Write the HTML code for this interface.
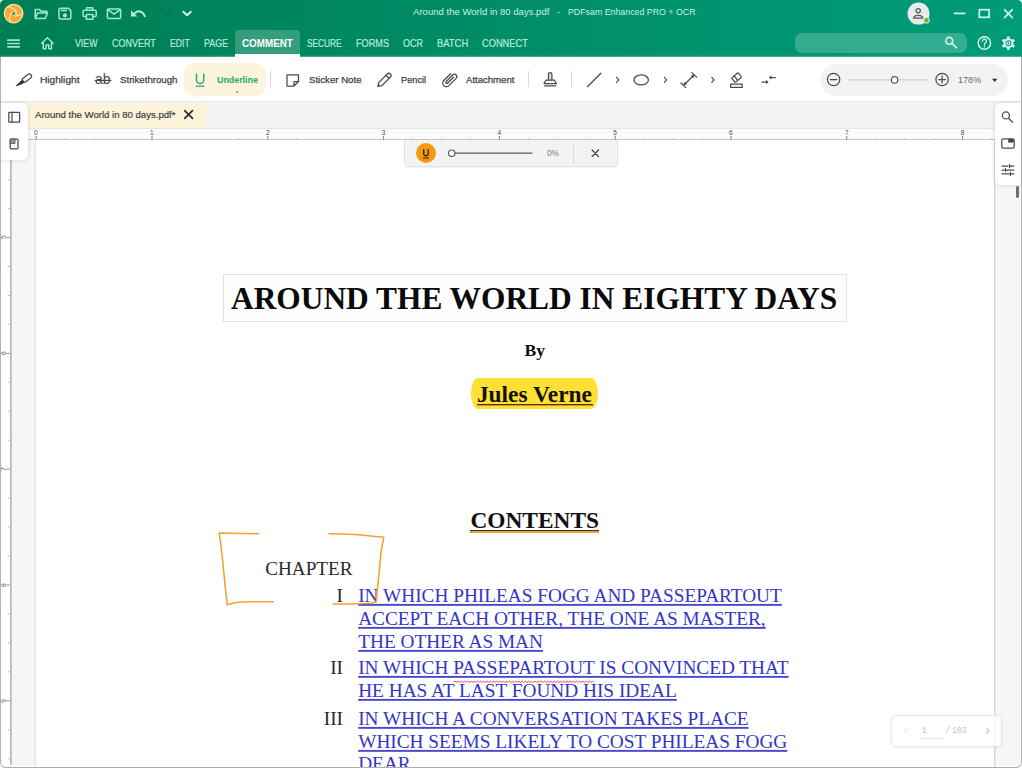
<!DOCTYPE html>
<html lang="en">
<head>
<meta charset="utf-8">
<title>Around the World in 80 days.pdf - PDFsam Enhanced PRO + OCR</title>
<style>
*{box-sizing:border-box;margin:0;padding:0}
html,body{width:1022px;height:768px;overflow:hidden;background:#fff}
body{font-family:"Liberation Sans",sans-serif;position:relative;color:#333}
.abs{position:absolute}
.lb{position:absolute;white-space:pre}
#win{position:absolute;left:0;top:0;width:1022px;height:768px;overflow:hidden;background:#fff}
#hdr{z-index:2;position:absolute;left:0;top:0;width:1022px;height:56.6px;background:linear-gradient(90deg,#007e55 0%,#00855c 25%,#008d67 50%,#009571 75%,#009b79 100%)}
#hdr:after{content:"";position:absolute;left:0;right:0;bottom:0;height:2px;background:linear-gradient(180deg,rgba(0,60,40,.15),rgba(255,255,255,.35))}
svg{position:absolute;left:0;top:0;overflow:visible}
#hdr .lb,#hdr svg{z-index:3}
.ic{stroke:#9de8d0;fill:none;stroke-width:1.5;stroke-linecap:round;stroke-linejoin:round}
#tabsel{z-index:1;position:absolute;left:235.2px;top:30px;width:64.8px;height:24.2px;background:rgba(255,255,255,.2);border-radius:3.5px 3.5px 0 0}
#tabsel:after{content:"";position:absolute;left:0;right:0;top:24.2px;height:3px;background:#fff}
#search{position:absolute;left:794.5px;top:32.5px;width:172px;height:20px;border-radius:7px;background:rgba(255,255,255,.2)}
#tb{position:absolute;left:0;top:56px;width:1022px;height:45.5px;background:#fff;border-bottom:1px solid #ececec}
.ti{stroke:#4a4a4a;fill:none;stroke-width:1.25;stroke-linecap:round;stroke-linejoin:round}
.sep{position:absolute;width:1px;background:#d6d9dc}
#tabbar{position:absolute;left:0;top:101.5px;width:1022px;height:26.5px;background:#f4f4f4}
#doctab{position:absolute;left:28px;top:1px;width:177.5px;height:25.5px;background:#fdf3da;border-radius:3px 3px 0 0}
#ruler{position:absolute;left:27px;top:128px;width:968px;height:12px;background:#fbfbfb;border-top:1px solid #e6e6e6;border-bottom:1px solid #c4c4c4}
#vr{position:absolute;left:0;top:140px;width:11.7px;height:625px;background:#fff}
#lgut{position:absolute;left:11.7px;top:140px;width:24.3px;height:625px;background:#f6f6f6}
#page{position:absolute;left:36px;top:140px;width:957.6px;height:628px;background:#fff;box-shadow:-1.2px 0 0 #e6e6e6,1.5px 0 0 #d8d8d8;font-family:"Liberation Serif",serif;color:#111}
#rgut{position:absolute;left:994.5px;top:140px;width:25.5px;height:625px;background:#f6f6f6}
.card{position:absolute;background:#fff;box-shadow:0 0 4px rgba(0,0,0,.16)}
.lnk{position:absolute;left:322.2px;color:#3434c8;transform:scaleY(.945);transform-origin:0 17.5px;text-decoration-skip-ink:none;text-decoration:underline;text-decoration-color:#4646cf;text-decoration-thickness:1.6px;text-underline-offset:2.2px;font-size:19.3px;white-space:nowrap;line-height:22px}
.num{position:absolute;width:60px;text-align:right;left:247px;font-size:19.3px;line-height:22px;color:#2a2a2a}
#frame{position:absolute;left:0;top:57px;width:1022px;height:711px;border:1px solid #b2b2b2;border-top:none;border-bottom:1.5px solid #adadad;border-radius:0 0 6px 6px;pointer-events:none}
</style>
</head>
<body>
<div id="win">

<div id="hdr">
<div id="tabsel"></div>
<div id="search"></div>
<div class="lb" style="left:412.8px;top:5.7px;font-size:9.5px;line-height:12.3px;color:#c9f1e4;transform:scaleX(1.0063);transform-origin:0 0;">Around the World in 80 days.pdf</div>
<div class="lb" style="left:557.2px;top:5.7px;font-size:9.5px;line-height:12.3px;color:#c9f1e4;transform:scaleX(0.9458);transform-origin:0 0;">-</div>
<div class="lb" style="left:568.3px;top:5.7px;font-size:9.5px;line-height:12.3px;color:#c9f1e4;transform:scaleX(0.9270);transform-origin:0 0;">PDFsam Enhanced PRO + OCR</div>
<div class="lb" style="left:74.8px;top:37.1px;font-size:10.4px;line-height:13.5px;color:#b6ecda;transform:scaleX(0.8471);transform-origin:0 0;-webkit-text-stroke:.2px #b6ecda;">VIEW</div>
<div class="lb" style="left:111.7px;top:37.1px;font-size:10.4px;line-height:13.5px;color:#b6ecda;transform:scaleX(0.8652);transform-origin:0 0;-webkit-text-stroke:.2px #b6ecda;">CONVERT</div>
<div class="lb" style="left:170.3px;top:37.1px;font-size:10.4px;line-height:13.5px;color:#b6ecda;transform:scaleX(0.8322);transform-origin:0 0;-webkit-text-stroke:.2px #b6ecda;">EDIT</div>
<div class="lb" style="left:204.1px;top:37.1px;font-size:10.4px;line-height:13.5px;color:#b6ecda;transform:scaleX(0.8574);transform-origin:0 0;-webkit-text-stroke:.2px #b6ecda;">PAGE</div>
<div class="lb" style="left:241.8px;top:37.1px;font-size:10.4px;line-height:13.5px;color:#ffffff;font-weight:bold;transform:scaleX(0.9462);transform-origin:0 0;">COMMENT</div>
<div class="lb" style="left:307.0px;top:37.1px;font-size:10.4px;line-height:13.5px;color:#b6ecda;transform:scaleX(0.7965);transform-origin:0 0;-webkit-text-stroke:.2px #b6ecda;">SECURE</div>
<div class="lb" style="left:355.5px;top:37.1px;font-size:10.4px;line-height:13.5px;color:#b6ecda;transform:scaleX(0.8793);transform-origin:0 0;-webkit-text-stroke:.2px #b6ecda;">FORMS</div>
<div class="lb" style="left:402.9px;top:37.1px;font-size:10.4px;line-height:13.5px;color:#b6ecda;transform:scaleX(0.8660);transform-origin:0 0;-webkit-text-stroke:.2px #b6ecda;">OCR</div>
<div class="lb" style="left:436.9px;top:37.1px;font-size:10.4px;line-height:13.5px;color:#b6ecda;transform:scaleX(0.9056);transform-origin:0 0;-webkit-text-stroke:.2px #b6ecda;">BATCH</div>
<div class="lb" style="left:481.9px;top:37.1px;font-size:10.4px;line-height:13.5px;color:#b6ecda;transform:scaleX(0.8915);transform-origin:0 0;-webkit-text-stroke:.2px #b6ecda;">CONNECT</div>
<svg width="1022" height="57" viewBox="0 0 1022 57">
 <!-- logo -->
 <circle cx="13.6" cy="13.6" r="9.3" fill="#f6aa35" stroke="#fae7a6" stroke-width="1.2"/>
 <g fill="none" stroke="#fcebb8" stroke-width="1.25" stroke-linecap="round">
  <path d="M8.4 6.9 C11 7.2 13.6 8.6 15.4 10.4 C16.3 11.5 16.5 12.8 16.2 14.2"/>
  <path d="M15.4 15.9 C17.8 16.2 20.4 15.2 22.4 13.4"/>
  <path d="M11.3 12.9 C9.9 14.6 9.4 17.8 10.2 21.6"/>
 </g>
 <path d="M10.6 13.6 L15.3 11 L15.3 16.2 Z" fill="#3c8c6c" stroke="#fcebb8" stroke-width=".7" stroke-linejoin="round"/>
 <!-- folder open -->
 <path class="ic" d="M35.2 18.5 V9.6 h4.3 l1.6 1.7 h5.6 v1.8 M35.2 18.5 l2.3 -5.4 h10 l-2.3 5.4 Z"/>
 <!-- save -->
 <path class="ic" d="M60.2 8.2 h8.2 l2.4 2.4 v7.2 a1.2 1.2 0 0 1 -1.2 1.2 h-9.4 a1.2 1.2 0 0 1 -1.2 -1.2 v-8.4 a1.2 1.2 0 0 1 1.2 -1.2 Z"/>
 <rect x="60.9" y="9.6" width="6" height="1.7" fill="#9de8d0"/>
 <circle cx="64.9" cy="15.4" r="2.05" fill="#9de8d0"/>
 <!-- print -->
 <path class="ic" d="M86.6 10.2 V7.8 h6 v2.4 M86.2 16.4 h-2.2 a1 1 0 0 1 -1 -1 v-3.8 a1.4 1.4 0 0 1 1.4 -1.4 h10.4 a1.4 1.4 0 0 1 1.4 1.4 v3.8 a1 1 0 0 1 -1 1 h-2.2 M86.4 14.6 h6.4 v4.6 h-6.4 Z"/>
 <!-- mail -->
 <path class="ic" d="M108.6 8.9 h10.8 a1.2 1.2 0 0 1 1.2 1.2 v7.2 a1.2 1.2 0 0 1 -1.2 1.2 h-10.8 a1.2 1.2 0 0 1 -1.2 -1.2 v-7.2 a1.2 1.2 0 0 1 1.2 -1.2 Z M107.8 9.6 l6.2 4.6 l6.2 -4.6"/>
 <!-- undo -->
 <path d="M131 10.3 V16.6 H137.2 Z" fill="#b4efdc"/>
 <path d="M134.2 13.6 C137.5 10 142.8 10.6 144.8 16.2" fill="none" stroke="#b4efdc" stroke-width="1.9" stroke-linecap="round"/>
 <!-- redo (disabled) -->
 <path d="M169.4 10.6 V16.4 H163.6 Z" fill="#007650" opacity=".75"/>
 <path d="M166.4 13.6 C163.4 10.6 158.6 11 156.8 15.8" fill="none" stroke="#007a55" stroke-width="1.7" stroke-linecap="round" opacity=".6"/>
 <!-- chevron -->
 <path d="M183.3 11.8 L187.1 15.3 L190.9 11.8" fill="none" stroke="#d2f6ea" stroke-width="1.9" stroke-linecap="round" stroke-linejoin="round"/>
 <!-- hamburger -->
 <path d="M7.2 40.1 H19.8 M7.2 43.5 H19.8 M7.2 46.9 H19.8" stroke="#9de8d0" stroke-width="1.6" fill="none"/>
 <!-- home -->
 <path class="ic" stroke-width="1.6" d="M41.6 43.2 L47.4 37.8 L53.2 43.2 M43.3 42.2 V48.8 H46 V45 H48.8 V48.8 H51.5 V42.2"/>
 <!-- avatar -->
 <circle cx="918.5" cy="13.6" r="11" fill="#e9eaea"/>
 <circle cx="918.2" cy="10.8" r="2.1" fill="none" stroke="#555" stroke-width="1.25"/>
 <path d="M913.6 18.2 c0 -2.2 2.2 -2.9 4.6 -2.9 s4.6 .7 4.6 2.9 Z" fill="none" stroke="#555" stroke-width="1.25" stroke-linejoin="round"/>
 <circle cx="926.5" cy="20.3" r="2.9" fill="#68b62e" stroke="#eef3e6" stroke-width="1"/>
 <!-- window controls -->
 <path d="M953.8 13.4 H965.4" stroke="#c9f5e8" stroke-width="1.8" fill="none"/>
 <rect x="979.3" y="9.7" width="9.8" height="7.6" fill="none" stroke="#c9f5e8" stroke-width="1.7"/>
 <path d="M1004.5 9.6 L1012.3 17.6 M1012.3 9.6 L1004.5 17.6" stroke="#c9f5e8" stroke-width="1.7" fill="none" stroke-linecap="round"/>
 <!-- search icon -->
 <circle cx="949.3" cy="40.7" r="3.4" fill="none" stroke="#c9f5e8" stroke-width="1.7"/>
 <path d="M951.9 43.4 L956.4 47.6" stroke="#c9f5e8" stroke-width="1.9" stroke-linecap="round"/>
 <!-- help -->
 <circle cx="984.4" cy="43" r="6.2" fill="none" stroke="#d8f8ee" stroke-width="1.4"/>
 <path d="M982.4 41.2 a2 2 0 1 1 3.2 1.6 c-.9 .6 -1.2 1 -1.2 2" fill="none" stroke="#d8f8ee" stroke-width="1.3" stroke-linecap="round"/>
 <circle cx="984.4" cy="46.6" r=".8" fill="#d8f8ee"/>
 <!-- gear -->
 <g transform="translate(1008.4 43.2)" fill="none" stroke="#d8f8ee">
  <circle r="4" stroke-width="2.1"/>
  <circle r="1.5" stroke-width="1.1"/>
  <g stroke-width="2.6" stroke-linecap="butt">
   <path d="M0 -4.6 V-6.8"/><path d="M0 4.6 V6.8"/>
   <path d="M3.98 -2.3 L5.89 -3.4"/><path d="M-3.98 -2.3 L-5.89 -3.4"/>
   <path d="M3.98 2.3 L5.89 3.4"/><path d="M-3.98 2.3 L-5.89 3.4"/>
  </g>
 </g>
 <!-- top corners -->
 <path d="M0 0 H4.5 A4.5 4.5 0 0 0 0 4.5 Z" fill="#fff"/>
 <path d="M1022 0 H1017.5 A4.5 4.5 0 0 1 1022 4.5 Z" fill="#fff"/>
</svg>
</div>


<div id="tb"></div>
<div class="abs" style="left:820px;top:63.5px;width:188px;height:32px;border-radius:16px;background:#f3f3f3"></div>
<div class="abs" style="left:184px;top:63.4px;width:81.5px;height:32.7px;border-radius:10px;background:#fdf4dd"></div>
<div class="lb" style="left:39.7px;top:73.5px;font-size:9.6px;line-height:12.5px;color:#404040;transform:scaleX(1.0577);transform-origin:0 0;-webkit-text-stroke:.25px #404040;">Highlight</div>
<div class="lb" style="left:95.4px;top:70.1px;font-size:14.4px;line-height:18.7px;color:#444;transform:scaleX(0.9616);transform-origin:0 0;">ab</div>
<div class="lb" style="left:119.5px;top:73.5px;font-size:9.6px;line-height:12.5px;color:#404040;transform:scaleX(1.0077);transform-origin:0 0;-webkit-text-stroke:.25px #404040;">Strikethrough</div>
<div class="lb" style="left:217.2px;top:73.5px;font-size:9.6px;line-height:12.5px;color:#1fa56c;font-weight:bold;transform:scaleX(0.9243);transform-origin:0 0;">Underline</div>
<div class="lb" style="left:308.8px;top:73.5px;font-size:9.6px;line-height:12.5px;color:#404040;transform:scaleX(1.0045);transform-origin:0 0;-webkit-text-stroke:.25px #404040;">Sticker Note</div>
<div class="lb" style="left:401.3px;top:73.5px;font-size:9.6px;line-height:12.5px;color:#404040;transform:scaleX(0.9602);transform-origin:0 0;-webkit-text-stroke:.25px #404040;">Pencil</div>
<div class="lb" style="left:466.3px;top:73.5px;font-size:9.6px;line-height:12.5px;color:#404040;transform:scaleX(0.9973);transform-origin:0 0;-webkit-text-stroke:.25px #404040;">Attachment</div>
<div class="lb" style="left:957.5px;top:73.9px;font-size:9.2px;line-height:12.0px;color:#6a6a6a;transform:scaleX(0.9872);transform-origin:0 0;">178%</div>
<div class="sep" style="left:270px;top:71px;height:16px"></div>
<div class="sep" style="left:527.5px;top:71px;height:16px"></div>
<div class="sep" style="left:571px;top:71px;height:16px"></div>
<svg width="1022" height="110" viewBox="0 0 1022 110">
 <!-- highlighter -->
 <g transform="translate(26.4 78.5) rotate(-38)">
  <rect x="-4.6" y="-2.3" width="10.4" height="4.6" rx="2.2" class="ti"/>
 </g>
 <path d="M22.6 79.6 L24.6 82.4 C21.5 84.6 18.5 85.6 15.4 86 C17.4 84.2 19.8 82.2 22.6 79.6 Z" fill="#333"/>
 <!-- strikethrough line -->
 <path d="M94.6 80.4 H111.4" stroke="#444" stroke-width="1.1"/>
 <!-- underline U -->
 <path d="M196.5 74 V79.9 a3.65 3.65 0 0 0 7.3 0 V74" fill="none" stroke="#2aa873" stroke-width="1.45" stroke-linecap="round"/>
 <path d="M195.8 86.2 H204.5" stroke="#2aa873" stroke-width="1.3"/>
 <circle cx="237.3" cy="91.8" r=".9" fill="#1d8f5c"/>
 <!-- sticker note -->
 <path class="ti" d="M287 74.9 H298.5 V81.5 L294 86 H287 Z M298.5 81.5 H294 V86"/>
 <!-- pencil -->
 <g transform="translate(384.6 79.8) rotate(-45)">
  <path class="ti" d="M-6.2 -2.2 H6 a2.2 2.2 0 0 1 0 4.4 H-6.2 L-9.4 0 Z M4.2 -2.2 V2.2"/><path d="M-9.6 0 L-7.2 -1.5 V1.5 Z" fill="#444"/>
 </g>
 <!-- paperclip -->
 <g transform="translate(449.6 79.8) rotate(-45)">
  <path class="ti" d="M5 -3.6 H-4.6 a3.6 3.6 0 0 0 0 7.2 H5.6 a2.4 2.4 0 0 0 0 -4.8 H-3.6 a1.1 1.1 0 0 0 0 2.2 H4.6"/>
 </g>
 <!-- stamp -->
 <path class="ti" d="M548.5 80 V74.3 a1.7 1.7 0 0 1 3.4 0 V80" fill="#e2e2e2" style="fill:#e4e4e4"/>
 <path class="ti" d="M546 80.2 H554.4 L556.4 83.6 H544 Z M544.6 85.9 H555.8"/>
 <!-- line -->
 <path class="ti" d="M587.6 86.5 L600.9 73.2" stroke-width="1.4"/>
 <path class="ti" d="M616.6 77.4 L618.8 79.9 L616.6 82.4" stroke-width=".95" stroke="#888"/>
 <!-- ellipse -->
 <ellipse cx="641.2" cy="79.9" rx="7.2" ry="5" class="ti" stroke-width="1.4"/>
 <path class="ti" d="M664.4 77.4 L666.6 79.9 L664.4 82.4" stroke-width=".95" stroke="#888"/>
 <!-- measure -->
 <path class="ti" d="M683.6 85.2 L694.3 74.7 M681 83 L685.8 87.6 M691.8 72.6 L696.7 77.1" stroke-width="1.05"/>
 <path d="M684.2 84.6 L684.6 82.2 L686.6 84.2 Z M693.7 75.3 L691.3 75.7 L693.3 77.7 Z" fill="#444" stroke="#444" stroke-width=".6" stroke-linejoin="round"/>
 <path class="ti" d="M711.8 77.4 L714 79.9 L711.8 82.4" stroke-width=".95" stroke="#888"/>
 <!-- eraser -->
 <g transform="translate(736.6 77.6) rotate(-40)">
  <rect x="-4.2" y="-2.9" width="8.4" height="5.8" rx="1" class="ti"/>
  <path class="ti" d="M-.8 -2.9 V2.9"/>
 </g>
 <rect x="730.6" y="84.2" width="11.6" height="3.2" class="ti"/>
 <!-- arrows -->
 <path class="ti" d="M762 82 H767 M775.4 77.5 H770.4" stroke-width="1.25"/>
 <path d="M766 80.1 L768.6 82 L766 83.9 Z M771.4 75.6 L768.8 77.5 L771.4 79.4 Z" fill="#444"/>
 <!-- zoom -->
 <circle cx="833.6" cy="79.5" r="6.2" class="ti" stroke-width="1.3"/>
 <path class="ti" d="M830.2 79.5 H837" stroke-width="1.4"/>
 <path d="M848.4 79.9 H927.7" stroke="#c9c9c9" stroke-width="1"/>
 <circle cx="894.6" cy="79.9" r="3.2" fill="#fff" stroke="#555" stroke-width="1.2"/>
 <circle cx="942.1" cy="79.5" r="6.2" class="ti" stroke-width="1.3"/>
 <path class="ti" d="M938.7 79.5 H945.5 M942.1 76.1 V82.9" stroke-width="1.4"/>
 <path d="M992 78.8 H997.4 L994.7 81.9 Z" fill="#333"/>
</svg>


<div id="tabbar"><div id="doctab"></div></div>
<div class="lb" style="left:34.6px;top:109.0px;font-size:9.5px;line-height:12.3px;color:#3d3d3d;transform:scaleX(1.0090);transform-origin:0 0;-webkit-text-stroke:.2px #3d3d3d;">Around the World in 80 days.pdf*</div>
<div id="ruler"></div>
<div id="vr"></div>
<div id="lgut"></div>
<div id="rgut"></div>
<div class="lb" style="left:34.0px;top:129.1px;font-size:6.5px;line-height:8.5px;color:#4a4a4a;">0</div><div class="lb" style="left:150.1px;top:129.1px;font-size:6.5px;line-height:8.5px;color:#4a4a4a;">1</div><div class="lb" style="left:265.9px;top:129.1px;font-size:6.5px;line-height:8.5px;color:#4a4a4a;">2</div><div class="lb" style="left:381.7px;top:129.1px;font-size:6.5px;line-height:8.5px;color:#4a4a4a;">3</div><div class="lb" style="left:497.5px;top:129.1px;font-size:6.5px;line-height:8.5px;color:#4a4a4a;">4</div><div class="lb" style="left:613.3px;top:129.1px;font-size:6.5px;line-height:8.5px;color:#4a4a4a;">5</div><div class="lb" style="left:729.1px;top:129.1px;font-size:6.5px;line-height:8.5px;color:#4a4a4a;">6</div><div class="lb" style="left:844.9px;top:129.1px;font-size:6.5px;line-height:8.5px;color:#4a4a4a;">7</div><div class="lb" style="left:960.7px;top:129.1px;font-size:6.5px;line-height:8.5px;color:#4a4a4a;">8</div>
<div class="lb" style="left:-.3px;top:233.4px;width:8px;height:8px;font-size:6.8px;line-height:8px;color:#666;text-align:center;transform:rotate(-90deg)">5</div><div class="lb" style="left:-.3px;top:349.2px;width:8px;height:8px;font-size:6.8px;line-height:8px;color:#666;text-align:center;transform:rotate(-90deg)">6</div><div class="lb" style="left:-.3px;top:465.0px;width:8px;height:8px;font-size:6.8px;line-height:8px;color:#666;text-align:center;transform:rotate(-90deg)">7</div><div class="lb" style="left:-.3px;top:580.8px;width:8px;height:8px;font-size:6.8px;line-height:8px;color:#666;text-align:center;transform:rotate(-90deg)">8</div><div class="lb" style="left:-.3px;top:696.6px;width:8px;height:8px;font-size:6.8px;line-height:8px;color:#666;text-align:center;transform:rotate(-90deg)">9</div>
<svg width="1022" height="768" viewBox="0 0 1022 768">
 <path d="M184.7 110.6 L192.5 118.4 M192.5 110.6 L184.7 118.4" stroke="#2b2b2b" stroke-width="1.65" stroke-linecap="round"/>
 <path d="M36.2 136 V139.5" stroke="#7d7d7d" stroke-width="1"/>
<path d="M152.0 136 V139.5" stroke="#7d7d7d" stroke-width="1"/>
<path d="M267.8 136 V139.5" stroke="#7d7d7d" stroke-width="1"/>
<path d="M383.6 136 V139.5" stroke="#7d7d7d" stroke-width="1"/>
<path d="M499.4 136 V139.5" stroke="#7d7d7d" stroke-width="1"/>
<path d="M615.2 136 V139.5" stroke="#7d7d7d" stroke-width="1"/>
<path d="M731.0 136 V139.5" stroke="#7d7d7d" stroke-width="1"/>
<path d="M846.8 136 V139.5" stroke="#7d7d7d" stroke-width="1"/>
<path d="M962.6 136 V139.5" stroke="#7d7d7d" stroke-width="1"/>
<path d="M65.2 138 V139.5" stroke="#c2c2c2" stroke-width="1"/>
<path d="M94.1 138 V139.5" stroke="#c2c2c2" stroke-width="1"/>
<path d="M123.0 138 V139.5" stroke="#c2c2c2" stroke-width="1"/>
<path d="M180.9 138 V139.5" stroke="#c2c2c2" stroke-width="1"/>
<path d="M209.9 138 V139.5" stroke="#c2c2c2" stroke-width="1"/>
<path d="M238.9 138 V139.5" stroke="#c2c2c2" stroke-width="1"/>
<path d="M296.8 138 V139.5" stroke="#c2c2c2" stroke-width="1"/>
<path d="M325.7 138 V139.5" stroke="#c2c2c2" stroke-width="1"/>
<path d="M354.6 138 V139.5" stroke="#c2c2c2" stroke-width="1"/>
<path d="M412.5 138 V139.5" stroke="#c2c2c2" stroke-width="1"/>
<path d="M441.5 138 V139.5" stroke="#c2c2c2" stroke-width="1"/>
<path d="M470.4 138 V139.5" stroke="#c2c2c2" stroke-width="1"/>
<path d="M528.4 138 V139.5" stroke="#c2c2c2" stroke-width="1"/>
<path d="M557.3 138 V139.5" stroke="#c2c2c2" stroke-width="1"/>
<path d="M586.2 138 V139.5" stroke="#c2c2c2" stroke-width="1"/>
<path d="M644.1 138 V139.5" stroke="#c2c2c2" stroke-width="1"/>
<path d="M673.1 138 V139.5" stroke="#c2c2c2" stroke-width="1"/>
<path d="M702.1 138 V139.5" stroke="#c2c2c2" stroke-width="1"/>
<path d="M760.0 138 V139.5" stroke="#c2c2c2" stroke-width="1"/>
<path d="M788.9 138 V139.5" stroke="#c2c2c2" stroke-width="1"/>
<path d="M817.9 138 V139.5" stroke="#c2c2c2" stroke-width="1"/>
<path d="M875.8 138 V139.5" stroke="#c2c2c2" stroke-width="1"/>
<path d="M904.7 138 V139.5" stroke="#c2c2c2" stroke-width="1"/>
<path d="M933.6 138 V139.5" stroke="#c2c2c2" stroke-width="1"/>
<path d="M991.6 138 V139.5" stroke="#c2c2c2" stroke-width="1"/>
<path d="M7.9 179.7 H9.7" stroke="#b5b5b5" stroke-width="1"/>
<path d="M7.9 208.6 H9.7" stroke="#b5b5b5" stroke-width="1"/>
<path d="M6.6 237.6 H9.6" stroke="#8a8a8a" stroke-width="1"/>
<path d="M7.9 266.5 H9.7" stroke="#b5b5b5" stroke-width="1"/>
<path d="M7.9 295.5 H9.7" stroke="#b5b5b5" stroke-width="1"/>
<path d="M7.9 324.4 H9.7" stroke="#b5b5b5" stroke-width="1"/>
<path d="M6.6 353.4 H9.6" stroke="#8a8a8a" stroke-width="1"/>
<path d="M7.9 382.3 H9.7" stroke="#b5b5b5" stroke-width="1"/>
<path d="M7.9 411.3 H9.7" stroke="#b5b5b5" stroke-width="1"/>
<path d="M7.9 440.2 H9.7" stroke="#b5b5b5" stroke-width="1"/>
<path d="M6.6 469.2 H9.6" stroke="#8a8a8a" stroke-width="1"/>
<path d="M7.9 498.1 H9.7" stroke="#b5b5b5" stroke-width="1"/>
<path d="M7.9 527.1 H9.7" stroke="#b5b5b5" stroke-width="1"/>
<path d="M7.9 556.0 H9.7" stroke="#b5b5b5" stroke-width="1"/>
<path d="M6.6 585.0 H9.6" stroke="#8a8a8a" stroke-width="1"/>
<path d="M7.9 614.0 H9.7" stroke="#b5b5b5" stroke-width="1"/>
<path d="M7.9 642.9 H9.7" stroke="#b5b5b5" stroke-width="1"/>
<path d="M7.9 671.9 H9.7" stroke="#b5b5b5" stroke-width="1"/>
<path d="M6.6 700.8 H9.6" stroke="#8a8a8a" stroke-width="1"/>
<path d="M7.9 729.8 H9.7" stroke="#b5b5b5" stroke-width="1"/>
<path d="M7.9 758.7 H9.7" stroke="#b5b5b5" stroke-width="1"/>
 <rect x="10" y="159.5" width="1.75" height="605.3" fill="#b7b7b7"/>
</svg>


<div id="page">
<div class="abs" style="left:186.5px;top:134px;width:624px;height:47.5px;border:1px solid #e3e3e3;background:#fefefe"></div>
<div class="abs" style="left:195px;top:141.3px;font-size:31.4px;line-height:36px;font-weight:bold;white-space:nowrap;color:#0a0a0a">AROUND THE WORLD IN EIGHTY DAYS</div>
<div class="abs" style="left:488.6px;top:198.5px;font-size:17.6px;line-height:22px;font-weight:bold;color:#111">By</div>
<div class="abs" style="left:435.3px;top:238.3px;width:126.8px;height:31px;background:#ffe135;border-radius:7px/15px"></div>
<div class="abs" style="left:440.9px;top:240.1px;font-size:23.4px;line-height:28px;font-weight:bold;white-space:nowrap;color:#14110a">Jules Verne</div>
<div class="abs" style="left:441.2px;top:264.2px;width:115.4px;height:1px;background:#4a3704"></div>
<div class="abs" style="left:441.2px;top:265.2px;width:115.4px;height:1.3px;background:#d9980f"></div>
<div class="abs" style="left:434.4px;top:366.2px;font-size:23.4px;line-height:28px;font-weight:bold;white-space:nowrap;color:#111">CONTENTS</div>
<div class="abs" style="left:434.4px;top:390.1px;width:128.6px;height:.9px;background:#333"></div>
<div class="abs" style="left:434.4px;top:391px;width:128.6px;height:1.6px;background:#f0a030"></div>
<div class="abs" style="left:229.2px;top:418.4px;font-size:19.2px;line-height:22px;white-space:nowrap;color:#2a2a2a">CHAPTER</div>
<div class="num" style="top:445.4px">I</div><div class="lnk" style="top:445.4px">IN WHICH PHILEAS FOGG AND PASSEPARTOUT</div>
<div class="lnk" style="top:468.1px">ACCEPT EACH OTHER, THE ONE AS MASTER,</div>
<div class="lnk" style="top:490.8px">THE OTHER AS MAN</div>
<div class="num" style="top:517.1px">II</div><div class="lnk" style="top:517.1px">IN WHICH PASSEPARTOUT IS CONVINCED THAT</div>
<div class="lnk" style="top:539.7px">HE HAS AT LAST FOUND HIS IDEAL</div>
<div class="num" style="top:568.2px">III</div><div class="lnk" style="top:568.2px">IN WHICH A CONVERSATION TAKES PLACE</div>
<div class="lnk" style="top:590.6px">WHICH SEEMS LIKELY TO COST PHILEAS FOGG</div>
<div class="lnk" style="top:613.0px">DEAR</div>
</div>


<svg width="1022" height="768" viewBox="0 0 1022 768">
 <!-- hand-drawn brackets -->
 <path d="M258.5 533.7 C245 533.6 232 533.2 219.1 533.1 C220 538 220.8 543 221.2 548.5 C222.2 556 223 563 223.6 570.3 C224.3 576.5 224.9 582.5 225.4 588.4 C226 594 226.6 599.5 227.2 604.7 C230.5 603.8 233.8 603 237.2 602.5 C243 601.9 249 601.9 255.3 601.8 C261.5 601.8 267.5 601.8 273.4 601.8" fill="none" stroke="#f2a233" stroke-width="1.55" stroke-linecap="round" stroke-linejoin="round"/>
 <path d="M329.1 533.7 C338 533.8 346.5 534 354.8 534.4 C364.5 535.2 374 536.2 383.8 537.3 C382.8 542.2 381.8 547.2 381.1 552.2 C380.4 558.2 379.8 564.2 379.3 570.3 C378.7 576.3 378.1 582.3 377.5 588.4 C377 593 376.6 597.5 376.2 601.9 C374 602.5 371.7 602.9 369.3 603.2 C363.3 603.6 357.3 603.8 351.2 603.9 C345.2 603.9 339.2 603.9 333.1 603.9" fill="none" stroke="#f2a233" stroke-width="1.55" stroke-linecap="round" stroke-linejoin="round"/>
 <!-- squiggly -->
 <path d="M453.3 681.8 L454.9 681.1 L456.5 682.5 L458.1 681.1 L459.7 682.5 L461.3 681.1 L462.9 682.5 L464.5 681.1 L466.1 682.5 L467.7 681.1 L469.3 682.5 L470.9 681.1 L472.5 682.5 L474.1 681.1 L475.7 682.5 L477.3 681.1 L478.9 682.5 L480.5 681.1 L482.1 682.5 L483.7 681.1 L485.3 682.5 L486.9 681.1 L488.5 682.5 L490.1 681.1 L491.7 682.5 L493.3 681.1 L494.9 682.5 L496.5 681.1 L498.1 682.5 L499.7 681.1 L501.3 682.5 L502.9 681.1 L504.5 682.5 L506.1 681.1 L507.7 682.5 L509.3 681.1 L510.9 682.5 L512.5 681.1 L514.1 682.5 L515.7 681.1 L517.3 682.5 L518.9 681.1 L520.5 682.5 L522.1 681.1 L523.7 682.5 L525.3 681.1 L526.9 682.5 L528.5 681.1 L530.1 682.5 L531.7 681.1 L533.3 682.5 L534.9 681.1 L536.5 682.5 L538.1 681.1 L539.7 682.5 L541.3 681.1 L542.9 682.5 L544.5 681.1 L546.1 682.5 L547.7 681.1 L549.3 682.5 L550.9 681.1 L552.5 682.5 L554.1 681.1 L555.7 682.5 L557.3 681.1 L558.9 682.5 L560.5 681.1 L562.1 682.5 L563.7 681.1 L565.3 682.5 L566.9 681.1 L568.5 682.5 L570.1 681.1 L571.7 682.5 L573.3 681.1 L574.9 682.5 L576.5 681.1 L578.1 682.5 L579.7 681.1 L581.3 682.5 L582.9 681.1 L584.5 682.5 L586.1 681.1 L587.7 682.5 L589.3 681.1 L590.9 682.5 L592.5 681.1 L593.9 682.5" fill="none" stroke="#e2504c" stroke-width="1"/>
</svg>

<!-- floating underline toolbar -->
<div class="abs" style="left:404.3px;top:139.5px;width:213.4px;height:27.7px;background:#f3f3f3;border:1px solid #e3e3e3;border-top:none;border-radius:0 0 5px 5px;box-shadow:0 1px 2px rgba(0,0,0,.06)"></div>
<div class="abs" style="left:415.8px;top:143px;width:20.4px;height:20.4px;border-radius:50%;background:#f39a10"></div>
<div class="sep" style="left:572.6px;top:143.5px;height:20px;background:#d9d9d9"></div>
<div class="lb" style="left:547.2px;top:147.7px;font-size:8.6px;line-height:11.2px;color:#808080;transform:scaleX(0.9580);transform-origin:0 0;">0%</div>
<svg width="1022" height="768" viewBox="0 0 1022 768">
 <path d="M423.7 149.6 V153.5 a2.3 2.3 0 0 0 4.6 0 V149.6" fill="none" stroke="#3a2a10" stroke-width="1.35" stroke-linecap="round"/>
 <path d="M423 158 H429" stroke="#3a2a10" stroke-width="1.1"/>
 <path d="M455 153.2 H532.3" stroke="#5a5a5a" stroke-width="1.3"/>
 <circle cx="451.7" cy="153.2" r="3.2" fill="#fff" stroke="#555" stroke-width="1.2"/>
 <path d="M592.1 150 L598.5 156.4 M598.5 150 L592.1 156.4" stroke="#4a4a4a" stroke-width="1.35" stroke-linecap="round"/>
</svg>

<!-- left card -->
<div class="card" style="left:-2px;top:102.5px;width:29.6px;height:57px;border-radius:0 5px 5px 0"></div>
<!-- right card -->
<div class="card" style="left:994.5px;top:103px;width:30px;height:81.5px;border-radius:5px 0 0 5px"></div>
<div class="abs" style="left:1015.8px;top:186px;width:2.9px;height:12.4px;background:#6e6e6e;border-radius:1.4px"></div>
<svg width="1022" height="768" viewBox="0 0 1022 768">
 <!-- left card icons -->
 <rect x="8.8" y="112.4" width="10.8" height="9.6" rx=".6" class="ti" stroke-width="1.3"/>
 <path class="ti" d="M12 112.4 V122" stroke-width="1.3"/>
 <rect x="10.2" y="139" width="7.8" height="9.8" rx="1" class="ti" stroke-width="1.2"/>
 <path d="M10.2 139 H15 V143.4 H10.2 Z" fill="#999" stroke="#555" stroke-width=".9"/>
 <!-- right card icons -->
 <circle cx="1005.9" cy="115.4" r="3.5" class="ti" stroke-width="1.5"/>
 <path class="ti" d="M1008.6 118.2 L1012.6 122.2" stroke-width="1.7"/>
 <rect x="1001.8" y="138.9" width="12.4" height="9.2" rx="1.4" class="ti" stroke-width="1.4"/>
 <path d="M1008.2 139 H1013.6 V142.6 H1008.2 Z" fill="#444"/>
 <path class="ti" d="M1002 166.1 H1008 M1010.4 166.1 H1013.8 M1009.6 164.5 V167.7 M1002 170 H1004 M1006.4 170 H1013.8 M1005.4 168.4 V171.6 M1002 173.9 H1009 M1011.4 173.9 H1013.8 M1010.4 172.3 V175.5" stroke-width="1.15"/>
</svg>

<!-- page number box -->
<div class="abs" style="left:891.4px;top:715px;width:111px;height:32.2px;border-radius:5px;background:rgba(255,255,255,.75);border:1px solid #e6e6e6;box-shadow:0 1px 3px rgba(0,0,0,.07)"></div>
<div class="lb" style="left:921.6px;top:726.1px;font-size:9px;line-height:11.7px;color:#c4c4c4;font-family:'Liberation Mono',monospace;">1</div>
<div class="lb" style="left:945.2px;top:726.1px;font-size:9px;line-height:11.7px;color:#c4c4c4;font-family:'Liberation Mono',monospace;">/</div><div class="lb" style="left:952.3px;top:726.1px;font-size:9px;line-height:11.7px;color:#c4c4c4;font-family:'Liberation Mono',monospace;transform:scaleX(0.9072);transform-origin:0 0;">103</div>
<svg width="1022" height="768" viewBox="0 0 1022 768">
 <path d="M920.3 738.7 H943.7" stroke="#ddd" stroke-width="1"/>
 <path d="M907 728.6 L904.6 731 L907 733.4" fill="none" stroke="#dedede" stroke-width="1"/>
 <path d="M986.4 728.4 L989 731 L986.4 733.6" fill="none" stroke="#bdbdbd" stroke-width="1.1"/>
</svg>
<div id="frame"></div>

</div>
</body>
</html>
